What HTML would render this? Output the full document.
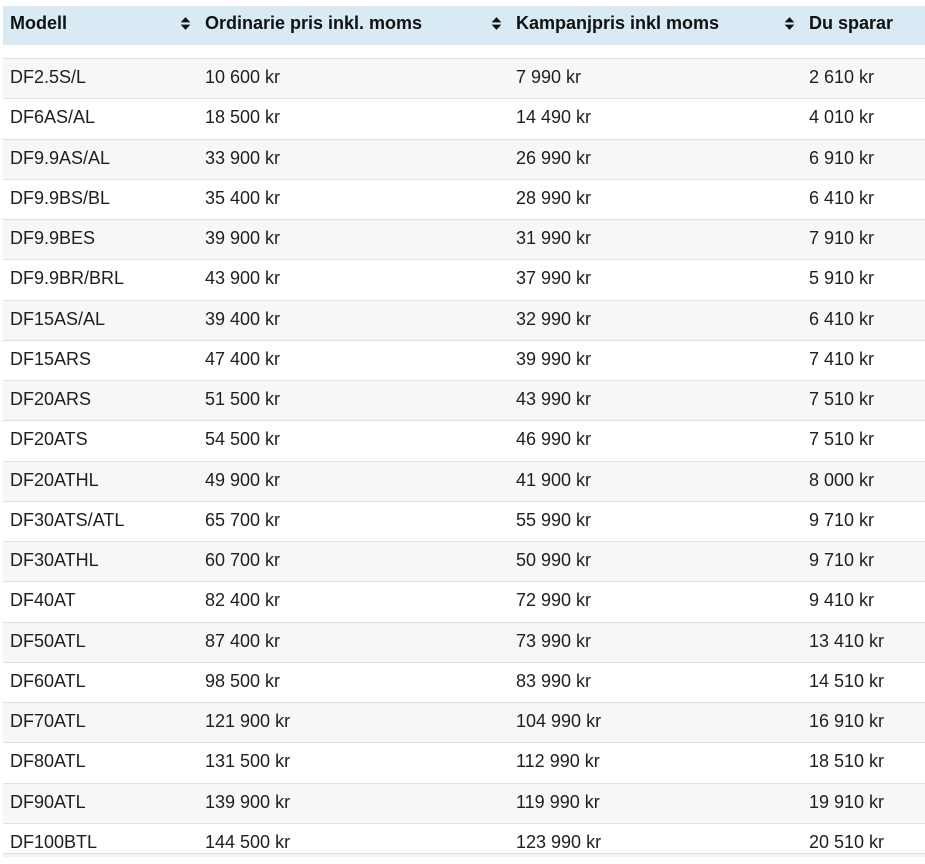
<!DOCTYPE html>
<html><head><meta charset="utf-8"><style>
body{margin:0;width:925px;height:856px;overflow:hidden;background:#fff;font-family:"Liberation Sans",sans-serif;color:#1f1f1f}
.hd{position:absolute;left:3px;top:6px;width:922px;height:39px;background:#d9eaf4;font-weight:bold;font-size:18px;color:#111}
.hd span{position:absolute;top:7px}
.ar{position:absolute;top:10px;width:11px;height:15px}
.r{position:absolute;left:3px;width:922px;height:40px;border-top:1px solid #e0e0e0;font-size:18px}
.r span{position:absolute;top:8px}
.g{background:#f7f7f7}
</style></head><body>
<div class="hd">
<span style="left:7px">Modell</span>
<svg class="ar" style="left:177px" viewBox="0 0 10 14"><path d="M5 1L9.5 6H.5z M5 13L9.5 8H.5z" fill="#111"/></svg>
<span style="left:202px">Ordinarie pris inkl. moms</span>
<svg class="ar" style="left:488px" viewBox="0 0 10 14"><path d="M5 1L9.5 6H.5z M5 13L9.5 8H.5z" fill="#111"/></svg>
<span style="left:513px">Kampanjpris inkl moms</span>
<svg class="ar" style="left:781px" viewBox="0 0 10 14"><path d="M5 1L9.5 6H.5z M5 13L9.5 8H.5z" fill="#111"/></svg>
<span style="left:806px">Du sparar</span>
</div>
<div id="t"></div>
<script>
var d=[["DF2.5S/L","10 600 kr","7 990 kr","2 610 kr"],["DF6AS/AL","18 500 kr","14 490 kr","4 010 kr"],["DF9.9AS/AL","33 900 kr","26 990 kr","6 910 kr"],["DF9.9BS/BL","35 400 kr","28 990 kr","6 410 kr"],["DF9.9BES","39 900 kr","31 990 kr","7 910 kr"],["DF9.9BR/BRL","43 900 kr","37 990 kr","5 910 kr"],["DF15AS/AL","39 400 kr","32 990 kr","6 410 kr"],["DF15ARS","47 400 kr","39 990 kr","7 410 kr"],["DF20ARS","51 500 kr","43 990 kr","7 510 kr"],["DF20ATS","54 500 kr","46 990 kr","7 510 kr"],["DF20ATHL","49 900 kr","41 900 kr","8 000 kr"],["DF30ATS/ATL","65 700 kr","55 990 kr","9 710 kr"],["DF30ATHL","60 700 kr","50 990 kr","9 710 kr"],["DF40AT","82 400 kr","72 990 kr","9 410 kr"],["DF50ATL","87 400 kr","73 990 kr","13 410 kr"],["DF60ATL","98 500 kr","83 990 kr","14 510 kr"],["DF70ATL","121 900 kr","104 990 kr","16 910 kr"],["DF80ATL","131 500 kr","112 990 kr","18 510 kr"],["DF90ATL","139 900 kr","119 990 kr","19 910 kr"],["DF100BTL","144 500 kr","123 990 kr","20 510 kr"]];
var h="",L=[7,202,513,806];
d.forEach(function(r,i){var y=Math.round(58+i*40.25);h+='<div class="r'+(i%2==0?' g':'')+'" style="top:'+y+'px">';r.forEach(function(c,j){h+='<span style="left:'+L[j]+'px">'+c+'</span>'});h+='</div>'});
h+='<div style="position:absolute;left:3px;top:853px;width:922px;height:3px;border-top:1px solid #e0e0e0;background:#f2f2f2"></div>';
document.getElementById("t").innerHTML=h;
</script>
</body></html>
